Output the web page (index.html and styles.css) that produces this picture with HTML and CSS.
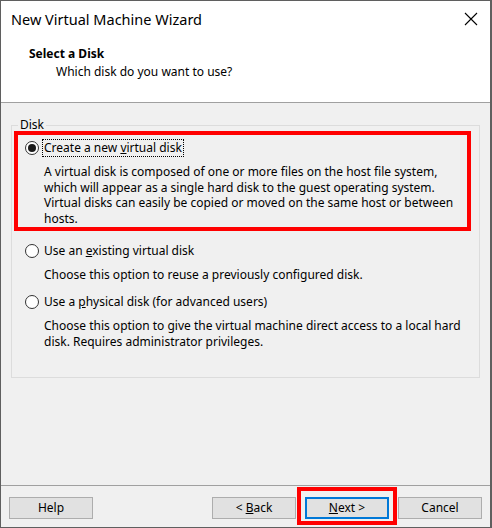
FILE: index.html
```html
<!DOCTYPE html>
<html lang="en">
<head>
<meta charset="utf-8">
<title>New Virtual Machine Wizard</title>
<link rel="stylesheet" href="styles.css">
</head>
<body>
<div class="window">
  <div class="top">
    <div class="titlebar">
      <span class="title">New Virtual Machine Wizard</span>
      <svg class="close" width="14" height="14" viewBox="0 0 14 14" aria-hidden="true">
        <path d="M1 1 L13 13 M13 1 L1 13" stroke="#000" stroke-width="1.1" fill="none"/>
      </svg>
    </div>
    <div class="header">
      <div class="h-title">Select a Disk</div>
      <div class="h-sub">Which disk do you want to use?</div>
    </div>
  </div>
  <div class="main">
    <fieldset class="group">
      <legend class="legend">Disk</legend>
      <div class="options">
        <div class="opt highlight">
          <div class="opt-row">
            <span class="radio checked"></span>
            <span class="label focus">Create a new <u>v</u>irtual disk</span>
          </div>
          <div class="opt-desc">A virtual disk is composed of one or more files on the host file system,<br>which will appear as a single hard disk to the guest operating system.<br>Virtual disks can easily be copied or moved on the same host or between<br>hosts.</div>
        </div>
        <div class="opt">
          <div class="opt-row">
            <span class="radio"></span>
            <span class="label">Use an <u>e</u>xisting virtual disk</span>
          </div>
          <div class="opt-desc">Choose this option to reuse a previously configured disk.</div>
        </div>
        <div class="opt">
          <div class="opt-row">
            <span class="radio"></span>
            <span class="label">Use a <u>p</u>hysical disk (for advanced users)</span>
          </div>
          <div class="opt-desc">Choose this option to give the virtual machine direct access to a local hard<br>disk. Requires administrator privileges.</div>
        </div>
      </div>
    </fieldset>
  </div>
  <div class="footer">
    <button class="btn">Help</button>
    <div class="btn-group">
      <button class="btn">&lt; <u>B</u>ack</button>
      <div class="btn-highlight">
        <button class="btn default"><u>N</u>ext &gt;</button>
      </div>
      <button class="btn">Cancel</button>
    </div>
  </div>
</div>
</body>
</html>
```
FILE: styles.css
```css
* { box-sizing: border-box; }
html, body { margin: 0; padding: 0; }
body {
  width: 492px;
  height: 528px;
  font-family: "Noto Sans", "Open Sans", "DejaVu Sans", sans-serif;
  font-size: 12px;
  color: #000;
  background: #fff;
}
.window {
  width: 492px;
  height: 528px;
  border: 1px solid #5f5f5f;
  border-right-width: 2px;
  background: #f0f0f0;
  display: flex;
  flex-direction: column;
}
.top {
  height: 102px;
  background: #fff;
  border-bottom: 1px solid #a0a0a0;
  flex: none;
}
.titlebar {
  height: 36px;
  display: flex;
  align-items: center;
  justify-content: space-between;
  padding: 0 12px 0 10px;
}
.title {
  font-size: 14.5px;
  line-height: 36px;
}
.close { display: block; }
.header { padding-top: 9px; }
.h-title {
  font-weight: bold;
  line-height: 16px;
  padding-left: 28px;
}
.h-sub {
  line-height: 16px;
  margin-top: 2px;
  padding-left: 55px;
}
.main {
  flex: 1;
  padding: 16px 10px 0 10px;
}
.group {
  margin: 0;
  padding: 0 0 27px 0;
  border: 1px solid #dcdcdc;
  min-width: 0;
}
.legend {
  margin-left: 6px;
  padding: 0 2px;
  line-height: 12px;
  font-size: 12px;
}
.options {
  display: flex;
  flex-direction: column;
  gap: 11px;
}
.opt { padding-left: 13px; }
.opt.highlight {
  margin: 0 8px 0 2px;
  padding: 4px 0 0 7px;
  border: 4px solid #ff0000;
}
.opt-row {
  height: 18px;
  display: flex;
  align-items: center;
}
.radio {
  width: 14px;
  height: 14px;
  border: 1px solid #333;
  border-radius: 50%;
  background: #fff;
  display: flex;
  align-items: center;
  justify-content: center;
  margin-right: 5px;
  flex: none;
}
.radio.checked::after {
  content: "";
  width: 8px;
  height: 8px;
  border-radius: 50%;
  background: #1a1a1a;
}
.label {
  line-height: 16px;
  padding: 0 1px;
  margin-left: -1px;
  white-space: nowrap;
}
.label.focus { outline: 1px dotted #000; outline-offset: 0; }
.opt-desc {
  margin-top: 7px;
  padding-left: 19px;
  line-height: 15.67px;
  white-space: nowrap;
}
.footer {
  flex: none;
  height: 42px;
  border-top: 1px solid #a0a0a0;
  padding: 1px 8px 0 8px;
  display: flex;
  justify-content: space-between;
  align-items: flex-start;
}
.btn-group {
  display: flex;
  align-items: flex-start;
  gap: 1px;
}
.btn {
  width: 84px;
  height: 22px;
  margin-top: 10px;
  border: 1px solid #adadad;
  background: #e1e1e1;
  font-family: inherit;
  font-size: 12px;
  color: #000;
  padding: 0;
  line-height: 18px;
}
.btn-highlight {
  border: 4px solid #ff0000;
  padding: 6px 4px 2px 4px;
}
.btn-highlight .btn { margin-top: 0; }
.btn.default { border: 2px solid #0078d7; }
```
